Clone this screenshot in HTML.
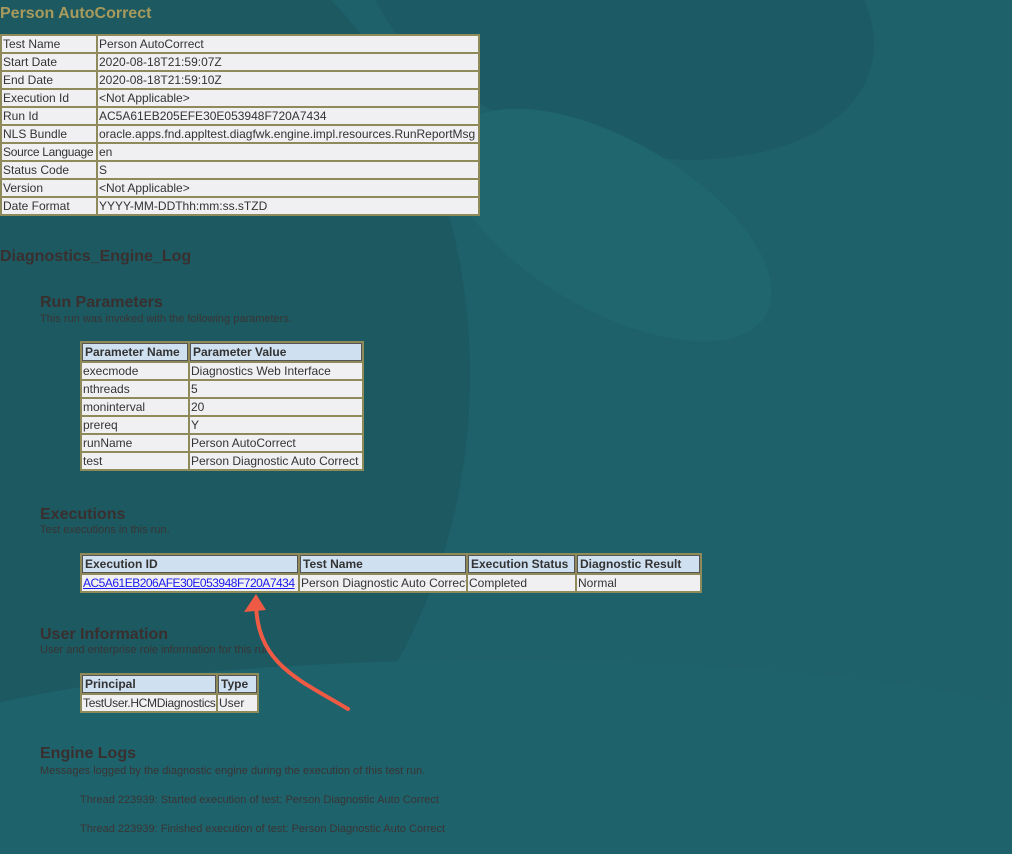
<!DOCTYPE html>
<html style="margin:0;width:1012px;height:854px;overflow:hidden"><head><meta charset="utf-8"><style>
body{margin:0;width:1012px;height:854px;overflow:hidden;background:#1e616b;font-family:"Liberation Sans",sans-serif;position:relative}
#w{position:absolute;left:0;top:0;width:1012px;height:854px;overflow:hidden}
.bg{position:absolute;border-radius:50%}
.abs{position:absolute}
table{border-collapse:separate;border-spacing:2px;background:#8f8a5a;table-layout:fixed;position:absolute;font-size:12px;color:#333;font-family:"Liberation Sans",sans-serif}
td,th{background:#f0f0f3;padding:0 1px;height:16px;line-height:16px;white-space:nowrap;overflow:hidden;text-align:left}
th{background:#cfe0f0;border:1px solid #555;font-weight:bold;height:16px;line-height:16px;font-size:12px;padding:0 2px}
.h{color:#3a2f2f;font-weight:bold;font-size:16px}
.s{color:#3a3434;font-size:11px}
</style></head><body><div id="w">
<div class="bg" style="left:-250px;top:-100px;width:720px;height:950px;background:#1c5961"></div>
<div class="bg" style="left:360px;top:-150px;width:520px;height:300px;background:#1c5b65;transform:rotate(15deg)"></div>
<div class="bg" style="left:430px;top:140px;width:360px;height:170px;background:#1f666f;transform:rotate(30deg)"></div>
<div class="bg" style="left:-100px;top:660px;width:1200px;height:190px;background:#1e626b;border-radius:50% 50% 0 0"></div>

<div class="abs" style="left:0;top:5px;color:#a89a5c;font-weight:bold;font-size:16px">Person AutoCorrect</div>

<table style="left:0;top:34px;width:480px">
<col style="width:94px"><col>
<tr><td>Test Name</td><td>Person AutoCorrect</td></tr>
<tr><td>Start Date</td><td>2020-08-18T21:59:07Z</td></tr>
<tr><td>End Date</td><td>2020-08-18T21:59:10Z</td></tr>
<tr><td>Execution Id</td><td>&lt;Not Applicable&gt;</td></tr>
<tr><td>Run Id</td><td>AC5A61EB205EFE30E053948F720A7434</td></tr>
<tr><td>NLS Bundle</td><td>oracle.apps.fnd.appltest.diagfwk.engine.impl.resources.RunReportMsg</td></tr>
<tr><td style="letter-spacing:-0.3px">Source Language</td><td>en</td></tr>
<tr><td>Status Code</td><td>S</td></tr>
<tr><td>Version</td><td>&lt;Not Applicable&gt;</td></tr>
<tr><td>Date Format</td><td>YYYY-MM-DDThh:mm:ss.sTZD</td></tr>
</table>

<div class="abs h" style="left:0;top:248px">Diagnostics_Engine_Log</div>
<div class="abs h" style="left:40px;top:294px">Run Parameters</div>
<div class="abs s" style="left:40px;top:313px">This run was invoked with the following parameters.</div>

<table style="left:80px;top:341px;width:284px">
<col style="width:106px"><col>
<tr><th>Parameter Name</th><th>Parameter Value</th></tr>
<tr><td>execmode</td><td>Diagnostics Web Interface</td></tr>
<tr><td>nthreads</td><td>5</td></tr>
<tr><td>moninterval</td><td>20</td></tr>
<tr><td>prereq</td><td>Y</td></tr>
<tr><td>runName</td><td>Person AutoCorrect</td></tr>
<tr><td>test</td><td>Person Diagnostic Auto Correct</td></tr>
</table>

<div class="abs h" style="left:40px;top:506px">Executions</div>
<div class="abs s" style="left:40px;top:524px">Test executions in this run.</div>

<table style="left:80px;top:553px;width:622px">
<col style="width:216px"><col style="width:166px"><col style="width:107px"><col>
<tr><th>Execution ID</th><th>Test Name</th><th>Execution Status</th><th>Diagnostic Result</th></tr>
<tr><td><span style="color:#1a1aee;text-decoration:underline;letter-spacing:-0.5px">AC5A61EB206AFE30E053948F720A7434</span></td><td>Person Diagnostic Auto Correct</td><td>Completed</td><td>Normal</td></tr>
</table>

<div class="abs h" style="left:40px;top:626px">User Information</div>
<div class="abs s" style="left:40px;top:644px">User and enterprise role information for this run.</div>

<table style="left:80px;top:673px;width:179px">
<col style="width:134px"><col>
<tr><th>Principal</th><th>Type</th></tr>
<tr><td style="letter-spacing:-0.3px">TestUser.HCMDiagnostics</td><td>User</td></tr>
</table>

<div class="abs h" style="left:40px;top:745px">Engine Logs</div>
<div class="abs s" style="left:40px;top:765px">Messages logged by the diagnostic engine during the execution of this test run.</div>
<div class="abs s" style="left:80px;top:794px">Thread 223939: Started execution of test: Person Diagnostic Auto Correct</div>
<div class="abs s" style="left:80px;top:823px">Thread 223939: Finished execution of test: Person Diagnostic Auto Correct</div>

<svg class="abs" style="left:0;top:0" width="1012" height="854">
<path d="M348 709 C300 680,258 665,256 605" stroke="#ef5a45" stroke-width="4" fill="none" stroke-linecap="round"/>
<path d="M244 612 L256 594 L266 610 Z" fill="#ef5a45"/>
</svg>
</div></body></html>
